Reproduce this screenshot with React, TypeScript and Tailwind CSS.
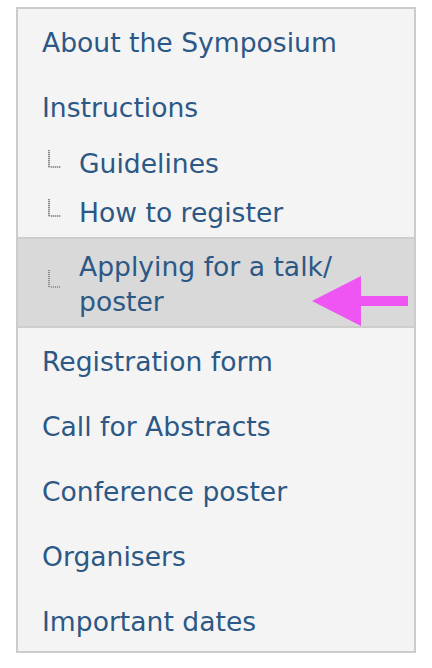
import React from 'react'

const font = { fontFamily: '"DejaVu Sans", Verdana, sans-serif' }

function TreeIcon() {
  // dotted elbow shown before sub items
  const dots = []
  for (let y = 0; y < 17; y += 2) dots.push(<rect key={'v' + y} x={0} y={y} width={2} height={1} fill="#8a8a8a" />)
  for (let x = 3; x <= 11; x += 2) dots.push(<rect key={'h' + x} x={x} y={16} width={1} height={2} fill="#999999" />)
  return (
    <svg width="13" height="18" viewBox="0 0 13 18" className="shrink-0">
      <rect x={0} y={0} width={2} height={18} fill="#d2d2d2" />
      <rect x={0} y={16} width={13} height={2} fill="#d2d2d2" />
      {dots}
    </svg>
  )
}

function TopItem({ label }: { label: string }) {
  return <div className="px-6 pt-4 pb-[14px] leading-[35px]">{label}</div>
}

function SubItem({ children, active }: { children: React.ReactNode; active?: boolean }) {
  return (
    <div
      className={
        active
          ? 'relative flex items-start pl-[30px] pr-6 pt-[10px] pb-[7px] leading-[35px] bg-[#d9d9d9] border-y-2 border-[#cdcdcd]'
          : 'flex items-start pl-[30px] pr-6 py-[7px] leading-[35px]'
      }
    >
      <div className={active ? 'w-[31px] pt-[21px]' : 'w-[31px] pt-[4px]'}>
        <TreeIcon />
      </div>
      <div>{children}</div>
      {active && (
        <svg className="absolute left-[294px] top-[37px]" width="98" height="50" viewBox="0 0 98 50">
          <polygon points="0,25 49,0 49,20 96,20 96,30 49,30 49,50" fill="#ee55f2" />
        </svg>
      )}
    </div>
  )
}

export default function App() {
  return (
    <div className="w-[432px] h-[668px] bg-white pt-[7px] pl-4" style={font}>
      <div className="w-[400px] h-[646px] border-2 border-[#cccccc] bg-[#f4f4f4] text-[26.6px] text-[#2c5885]">
        <TopItem label="About the Symposium" />
        <TopItem label="Instructions" />
        <SubItem>Guidelines</SubItem>
        <SubItem>How to register</SubItem>
        <SubItem active>
          Applying for a talk/
          <br />
          poster
        </SubItem>
        <TopItem label="Registration form" />
        <TopItem label="Call for Abstracts" />
        <TopItem label="Conference poster" />
        <TopItem label="Organisers" />
        <TopItem label="Important dates" />
      </div>
    </div>
  )
}
